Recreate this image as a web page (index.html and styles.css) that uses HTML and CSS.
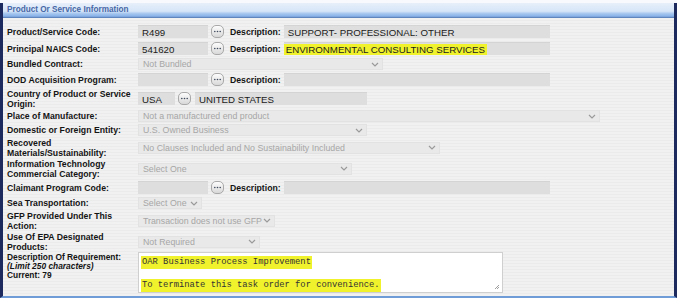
FILE: index.html
```html
<!DOCTYPE html>
<html lang="en">
<head>
    <meta charset="UTF-8">
    <title>Product Or Service Information</title>
    <link rel="stylesheet" href="styles.css">
</head>
<body>
<div class="top-strip"></div>
<div class="panel">
    <div class="panel-title">Product Or Service Information</div>
    <div class="panel-body">
        <div class="row">
            <span class="field-label">Product/Service Code:</span>
            <span class="input code">R499</span>
            <span class="lookup"><svg viewBox="0 0 11 11"><circle cx="2.8" cy="5.5" r="0.8"/><circle cx="5.5" cy="5.5" r="0.8"/><circle cx="8.2" cy="5.5" r="0.8"/></svg></span>
            <span class="desc-label">Description:</span>
            <span class="input desc">SUPPORT- PROFESSIONAL: OTHER</span>
        </div>
        <div class="row">
            <span class="field-label">Principal NAICS Code:</span>
            <span class="input code">541620</span>
            <span class="lookup"><svg viewBox="0 0 11 11"><circle cx="2.8" cy="5.5" r="0.8"/><circle cx="5.5" cy="5.5" r="0.8"/><circle cx="8.2" cy="5.5" r="0.8"/></svg></span>
            <span class="desc-label">Description:</span>
            <span class="input desc hl-wrap"><span class="hl">ENVIRONMENTAL CONSULTING SERVICES</span></span>
        </div>
        <div class="row short">
            <span class="field-label">Bundled Contract:</span>
            <span class="select w-bundled">Not Bundled<svg class="chev" viewBox="0 0 8 5"><polyline points="1,1 4,4 7,1"/></svg></span>
        </div>
        <div class="row">
            <span class="field-label">DOD Acquisition Program:</span>
            <span class="input code"></span>
            <span class="lookup"><svg viewBox="0 0 11 11"><circle cx="2.8" cy="5.5" r="0.8"/><circle cx="5.5" cy="5.5" r="0.8"/><circle cx="8.2" cy="5.5" r="0.8"/></svg></span>
            <span class="desc-label">Description:</span>
            <span class="input desc"></span>
        </div>
        <div class="row tall">
            <span class="field-label">Country of Product or Service Origin:</span>
            <span class="input country">USA</span>
            <span class="lookup"><svg viewBox="0 0 11 11"><circle cx="2.8" cy="5.5" r="0.8"/><circle cx="5.5" cy="5.5" r="0.8"/><circle cx="8.2" cy="5.5" r="0.8"/></svg></span>
            <span class="input country-name">UNITED STATES</span>
        </div>
        <div class="row short">
            <span class="field-label">Place of Manufacture:</span>
            <span class="select w-place">Not a manufactured end product<svg class="chev" viewBox="0 0 8 5"><polyline points="1,1 4,4 7,1"/></svg></span>
        </div>
        <div class="row short">
            <span class="field-label">Domestic or Foreign Entity:</span>
            <span class="select w-entity">U.S. Owned Business<svg class="chev" viewBox="0 0 8 5"><polyline points="1,1 4,4 7,1"/></svg></span>
        </div>
        <div class="row tall">
            <span class="field-label">Recovered Materials/Sustainability:</span>
            <span class="select w-recovered">No Clauses Included and No Sustainability Included<svg class="chev" viewBox="0 0 8 5"><polyline points="1,1 4,4 7,1"/></svg></span>
        </div>
        <div class="row tall">
            <span class="field-label">Information Technology Commercial Category:</span>
            <span class="select w-it">Select One<svg class="chev" viewBox="0 0 8 5"><polyline points="1,1 4,4 7,1"/></svg></span>
        </div>
        <div class="row">
            <span class="field-label">Claimant Program Code:</span>
            <span class="input code"></span>
            <span class="lookup"><svg viewBox="0 0 11 11"><circle cx="2.8" cy="5.5" r="0.8"/><circle cx="5.5" cy="5.5" r="0.8"/><circle cx="8.2" cy="5.5" r="0.8"/></svg></span>
            <span class="desc-label">Description:</span>
            <span class="input desc"></span>
        </div>
        <div class="row short">
            <span class="field-label">Sea Transportation:</span>
            <span class="select fit">Select One<svg class="chev" viewBox="0 0 8 5"><polyline points="1,1 4,4 7,1"/></svg></span>
        </div>
        <div class="row tall">
            <span class="field-label">GFP Provided Under This Action:</span>
            <span class="select w-gfp">Transaction does not use GFP<svg class="chev" viewBox="0 0 8 5"><polyline points="1,1 4,4 7,1"/></svg></span>
        </div>
        <div class="row tall">
            <span class="field-label">Use Of EPA Designated Products:</span>
            <span class="select w-epa">Not Required<svg class="chev" viewBox="0 0 8 5"><polyline points="1,1 4,4 7,1"/></svg></span>
        </div>
        <div class="row req">
            <span class="field-label req-label">Description Of Requirement:<br><em>(Limit 250 characters)</em><br>Current: 79</span>
            <div class="textarea">
                <div class="line"><span class="hl">OAR Business Process Improvement</span></div>
                <div class="line">&nbsp;</div>
                <div class="line"><span class="hl">To terminate this task order for convenience.</span></div>
                <svg class="grip" viewBox="0 0 6 6"><line x1="5" y1="1" x2="1" y2="5"/><line x1="5" y1="3" x2="3" y2="5"/></svg>
            </div>
        </div>
    </div>
</div>
</body>
</html>
```

FILE: styles.css
```css
:root {
    --navy: #1d2a5e;
    --label-color: #141414;
    --input-bg: #dedede;
    --select-bg: #e9e9e9;
    --select-text: #a6a6a6;
    --marker: #f0f22c;
}

body {
    margin: 0;
    background-color: #fff;
    font-family: 'Liberation Sans', Arial, sans-serif;
    color: var(--label-color);
}

.top-strip {
    height: 3px;
    width: 677px;
    background-color: #f7f9fc;
}

.panel {
    width: 671px;
    border-left: 3px solid var(--navy);
    border-right: 3px solid var(--navy);
    border-bottom: 2px solid #6f9bd6;
}

.panel-title {
    height: 15px;
    line-height: 13px;
    padding-left: 4px;
    font-size: 8.2px;
    font-weight: bold;
    color: #4767a6;
    background: linear-gradient(#e7effa 0%, #d6e5f8 55%, #a3c4ef 72%, #8ab3e9 88%, #4f74ae 100%);
}

.panel-body {
    padding: 5px 0 0 4px;
    height: 273px;
    background: repeating-linear-gradient(#f1f1f1 0 2px, #ebebeb 2px 3px);
}

.row {
    display: flex;
    align-items: center;
    height: 17px;
}

.row.short {
    height: 14px;
}

.row.tall {
    height: 21px;
}

.row.req {
    height: 43px;
    align-items: flex-start;
}

.field-label {
    flex: none;
    width: 131px;
    font-size: 8.7px;
    line-height: 10px;
    font-weight: bold;
}

.req-label {
    padding-top: 1px;
    font-size: 8.4px;
    line-height: 9px;
}

.input {
    box-sizing: border-box;
    height: 13px;
    padding-left: 4px;
    line-height: 13px;
    font-size: 9.7px;
    color: #1b1b1b;
    background-color: var(--input-bg);
    border-top: 1px solid #d4d4d4;
    white-space: nowrap;
    overflow: hidden;
}

.input.code { width: 70px; }
.input.desc { width: 266px; }
.input.country { width: 37px; }
.input.country-name { width: 172px; margin-left: 4px; }

.input.hl-wrap {
    padding-left: 0;
}

.hl {
    background-color: var(--marker);
    padding: 0 2px 1px 2px;
}

.lookup {
    box-sizing: border-box;
    display: flex;
    width: 13px;
    height: 13px;
    margin-left: 3px;
    border: 1px solid #a9a9a9;
    border-radius: 5px;
    background: linear-gradient(#fdfdfd, #d8d8d8);
}

.lookup svg {
    width: 11px;
    height: 11px;
    fill: #3f4a5e;
}

.desc-label {
    margin: 0 3px 0 6px;
    font-size: 8.7px;
    font-weight: bold;
}

.select {
    box-sizing: border-box;
    display: flex;
    align-items: center;
    justify-content: space-between;
    height: 12px;
    padding: 0 3px 0 4px;
    font-size: 8.8px;
    color: var(--select-text);
    background-color: var(--select-bg);
    border: 1px solid #e2e2e2;
    white-space: nowrap;
}

.select.fit {
    justify-content: flex-start;
}

.select.fit .chev {
    margin-left: 3px;
}

.w-bundled { width: 245px; }
.w-place { width: 462px; }
.w-entity { width: 229px; }
.w-recovered { width: 302px; }
.w-it { width: 214px; }
.w-gfp { width: 137px; }
.w-epa { width: 122px; }

.chev {
    width: 8px;
    height: 5px;
    fill: none;
    stroke: #9a9a9a;
    stroke-width: 1.2;
}

.textarea {
    position: relative;
    box-sizing: border-box;
    width: 365px;
    height: 41px;
    padding: 4px 0 0 2px;
    background-color: #fff;
    border: 1px solid #cfcfcf;
    font-family: 'Liberation Mono', 'DejaVu Sans Mono', monospace;
    font-size: 8.8px;
    line-height: 11.5px;
    color: #333;
}

.textarea .hl {
    padding: 1px 1px 2px 1px;
}

.grip {
    position: absolute;
    right: 2px;
    bottom: 2px;
    width: 6px;
    height: 6px;
    stroke: #888;
    stroke-width: 0.8;
}
```
